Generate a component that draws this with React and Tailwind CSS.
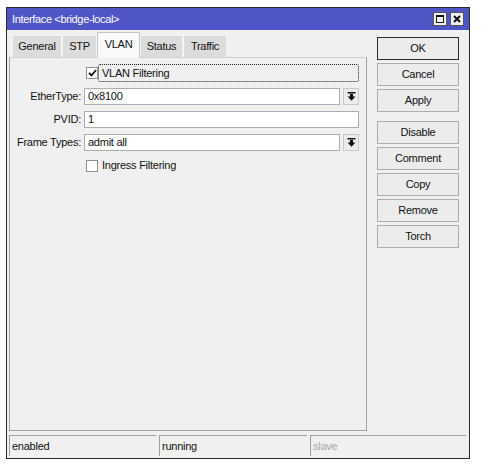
import React from 'react';

const font = { fontFamily: '"Liberation Sans", Arial, sans-serif' };

const DropIcon = () => (
  <svg width="9" height="9" viewBox="0 0 9 9">
    <rect x="0.5" y="0" width="8" height="1.5" fill="#111" />
    <rect x="3" y="2" width="3" height="3" fill="#111" />
    <polygon points="0.5,4.5 8.5,4.5 4.5,8.8" fill="#111" />
  </svg>
);

const Check = ({ checked }) => (
  <div className="w-[12px] h-[12px] border border-[#8e8f8f] bg-white flex items-center justify-center">
    {checked && (
      <svg width="9" height="8" viewBox="0 0 9 8">
        <path d="M1 4 L3.5 6.5 L8 1" stroke="#111" strokeWidth="1.8" fill="none" />
      </svg>
    )}
  </div>
);

const Field = ({ label, value, drop }) => (
  <div className="flex items-center h-[17px]">
    <div className="w-[70px] text-right text-[#111]">{label}</div>
    <div className="ml-[3px] flex-1 flex gap-[3px] h-full">
      <div className="flex-1 bg-white border border-[#abadb3] flex items-center px-[3px] text-[#111]">
        {value}
      </div>
      {drop && (
        <div className="w-[16px] border border-[#c9c9c9] bg-[#ececec] flex items-center justify-center">
          <DropIcon />
        </div>
      )}
    </div>
  </div>
);

const Btn = ({ children, def }) => (
  <div
    className={`h-[23px] flex items-center justify-center bg-[#ececec] text-[#111] ${
      def ? 'border border-[#2a2a2a]' : 'border border-[#adadad]'
    }`}
  >
    {children}
  </div>
);

const tabs = ['General', 'STP', 'VLAN', 'Status', 'Traffic'];
const tabW = { General: 50, STP: 35, VLAN: 43, Status: 43, Traffic: 44 };

export default function App() {
  return (
    <div className="w-[483px] h-[470px] bg-white pt-[7px] pl-[6px] text-[11px] tracking-[-0.25px]" style={font}>
      <div className="w-[464px] h-[452px] border border-[#2b2b2b] bg-[#f0f0f0] flex flex-col">
        {/* title bar */}
        <div className="h-[22px] bg-[#4f54c6] flex items-center justify-between pl-[5px] pr-[5px]">
          <span className="text-white text-[11px] tracking-[-0.35px]">Interface &lt;bridge-local&gt;</span>
          <div className="flex gap-[3px]">
            <div className="w-[14px] h-[14px] bg-[#f0f0f0] border border-[#555] flex items-center justify-center">
              <div className="w-[8px] h-[8px] border border-[#111] border-t-2" />
            </div>
            <div className="w-[14px] h-[14px] bg-[#f0f0f0] border border-[#555] flex items-center justify-center">
              <svg width="8" height="8" viewBox="0 0 8 8">
                <path d="M1 1 L7 7 M7 1 L1 7" stroke="#111" strokeWidth="2" />
              </svg>
            </div>
          </div>
        </div>

        <div className="flex flex-1 pt-[2px]">
          {/* left: tabs + panel */}
          <div className="ml-[2px] w-[358px] flex flex-col">
            <div className="flex items-end h-[25px] pl-[3px]">
              {tabs.map((t) =>
                t === 'VLAN' ? (
                  <div
                    key={t}
                    style={{ width: tabW[t] }}
                    className="h-[26px] -mb-px relative z-10 bg-[#fafafa] border border-[#c4c4c4] border-b-0 flex items-center justify-center pb-[3px] text-[#111]"
                  >
                    {t}
                  </div>
                ) : (
                  <div
                    key={t}
                    style={{ width: tabW[t] }}
                    className="h-[22px] bg-[#dcdcdc] border border-[#f4f4f4] border-b-0 flex items-center justify-center text-[#111]"
                  >
                    {t}
                  </div>
                )
              )}
            </div>
            <div className="flex-1 border border-[#a3a3a3] border-t-[#d0d0d0] pt-[6px] pl-[1px] pr-[7px] flex flex-col gap-[6px]">
              <div className="flex items-center h-[18px]">
                <div className="ml-[75px]">
                  <Check checked />
                </div>
                <div className="flex-1 h-full border border-dotted border-[#222] rounded-[2px] flex items-center pl-[3px] text-[#111]">
                  VLAN Filtering
                </div>
              </div>
              <Field label="EtherType:" value="0x8100" drop />
              <Field label="PVID:" value="1" />
              <Field label="Frame Types:" value="admit all" drop />
              <div className="flex items-center h-[17px]">
                <div className="ml-[75px]">
                  <Check />
                </div>
                <div className="pl-[4px] text-[#111]">Ingress Filtering</div>
              </div>
            </div>
          </div>

          {/* right: buttons */}
          <div className="ml-[10px] w-[82px] pt-[5px] flex flex-col">
            <Btn def>OK</Btn>
            <div className="mt-[3px]"><Btn>Cancel</Btn></div>
            <div className="mt-[3px]"><Btn>Apply</Btn></div>
            <div className="mt-[9px]"><Btn>Disable</Btn></div>
            <div className="mt-[3px]"><Btn>Comment</Btn></div>
            <div className="mt-[3px]"><Btn>Copy</Btn></div>
            <div className="mt-[3px]"><Btn>Remove</Btn></div>
            <div className="mt-[3px]"><Btn>Torch</Btn></div>
          </div>
        </div>

        {/* status bar */}
        <div className="h-[21px] mt-[4px] mb-[2px] ml-[2px] mr-[3px] flex gap-[3px]">
          <div className="w-[147px] border-t border-l border-[#a0a0a0] flex items-center pl-[2px] text-[#111]">enabled</div>
          <div className="w-[148px] border-t border-l border-[#a0a0a0] flex items-center pl-[2px] text-[#111]">running</div>
          <div className="flex-1 border-t border-l border-[#a0a0a0] flex items-center pl-[2px] text-[#a8a8a8]">slave</div>
        </div>
      </div>
    </div>
  );
}
